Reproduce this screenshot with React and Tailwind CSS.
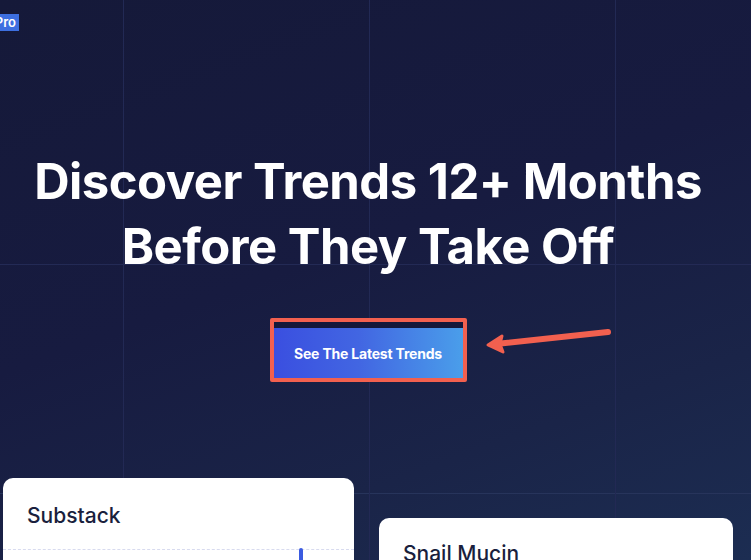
import React from "react";

export default function App() {
  return (
    <div
      className="relative flex w-[751px] h-[560px] flex-col overflow-hidden bg-[linear-gradient(90deg,transparent_123px,#222954_123px,#222954_124px,transparent_124px,transparent_369px,#222954_369px,#222954_370px,transparent_370px,transparent_615px,#222954_615px,#222954_616px,transparent_616px),linear-gradient(180deg,transparent_264px,#232a55_264px,#232a55_265px,transparent_265px,transparent_493px,#27345b_493px,#27345b_494px,transparent_494px),linear-gradient(160deg,#151939_0%,#171b40_45%,#1a2448_75%,#1c2d52_100%)]"
      style={{ fontFamily: "Inter, 'Noto Sans', sans-serif" }}
    >
      {/* Pro badge */}
      <div className="absolute left-0 top-[14px] flex h-[17px] w-[19px] items-center justify-end overflow-hidden bg-[#3d6fe0] pr-[3px]">
        <span className="text-[13px] font-semibold leading-[17px] text-white">Pro</span>
      </div>

      <div className="flex flex-col items-center pt-[149px] pr-[15px]">
        <h1 className="text-center text-[49px] font-bold leading-[65px] tracking-[-0.5px] text-white">
          Discover Trends 12+ Months
          <br />
          Before They Take Off
        </h1>

        <div className="relative mt-[39px] flex">
          <div className="flex flex-col rounded-[2px] border-4 border-[#f2604f] bg-[#1a1d3d]">
            <div className="h-[6px] w-[189px] bg-[#15183a]" />
            <button className="flex h-[50px] w-[189px] items-center justify-center bg-[linear-gradient(90deg,#3a4fe0_0%,#4266e2_45%,#4a9eea_100%)] text-[14px] font-bold tracking-[-0.2px] text-white">
              See The Latest Trends
            </button>
          </div>
          <svg
            className="absolute left-[214px] top-[8px]"
            width="130"
            height="30"
            viewBox="0 0 130 30"
          >
            <line x1="124" y1="6" x2="12" y2="18" stroke="#f2604f" strokeWidth="6" strokeLinecap="round" />
            <path d="M4 19 L18 10 L16 18 L19 26 Z" fill="#f2604f" stroke="#f2604f" strokeWidth="3" strokeLinejoin="round" />
          </svg>
        </div>
      </div>

      <div className="mt-[96px] flex items-start gap-[25px] pl-[3px]">
        <div className="flex h-[120px] w-[351px] flex-col rounded-[10px] bg-white">
          <div className="px-6 pt-[24px] text-[21px] font-medium leading-[28px] text-[#1a1f3d]">
            Substack
          </div>
          <div className="mt-[19px] flex border-t border-dashed border-[#d8dbef] pl-[296px]">
            <div className="-mt-[2px] h-[20px] w-[4px] rounded-t bg-[#3b5be0]" />
          </div>
        </div>
        <div className="mt-[40px] h-[120px] w-[354px] rounded-[10px] bg-white">
          <div className="px-6 pt-[22px] text-[21px] font-medium leading-[28px] text-[#1a1f3d]">
            Snail Mucin
          </div>
        </div>
      </div>
    </div>
  );
}
